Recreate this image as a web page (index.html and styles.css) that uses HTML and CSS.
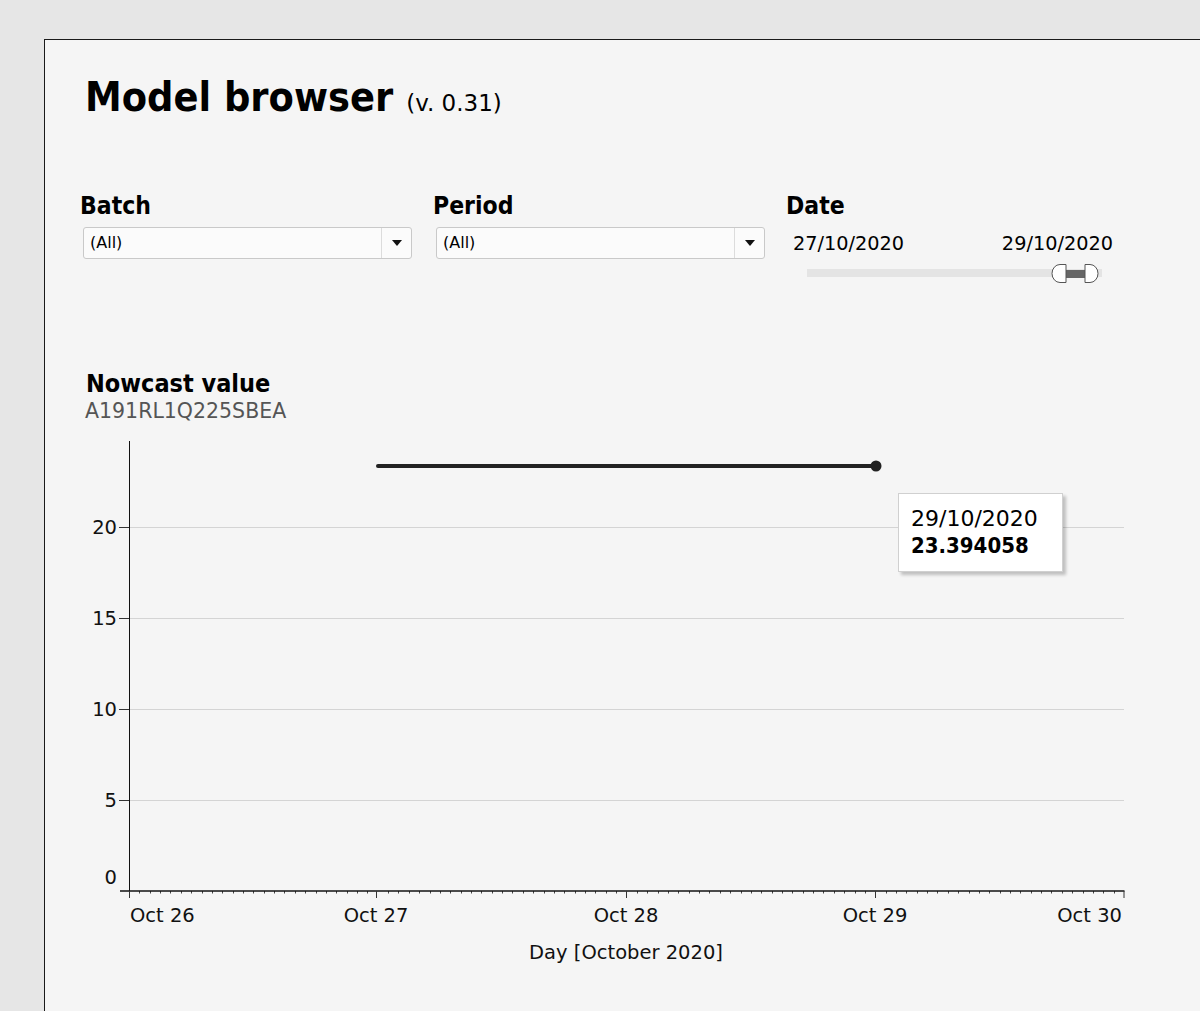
FILE: index.html
```html
<!DOCTYPE html>
<html>
<head>
<meta charset="utf-8">
<link rel="stylesheet" href="styles.css">
</head>
<body>
<div class="panel">
  <header class="title-row">
    <h1 class="title">Model browser</h1>
    <span class="version">(v. 0.31)</span>
  </header>

  <section class="filters">
    <div class="filter">
      <div class="filter-label">Batch</div>
      <div class="select">
        <span class="select-text">(All)</span>
        <span class="select-btn"><span class="arrow"></span></span>
      </div>
    </div>
    <div class="filter">
      <div class="filter-label">Period</div>
      <div class="select">
        <span class="select-text">(All)</span>
        <span class="select-btn"><span class="arrow"></span></span>
      </div>
    </div>
    <div class="filter filter-date">
      <div class="filter-label">Date</div>
      <div class="date-values">
        <span>27/10/2020</span>
        <span>29/10/2020</span>
      </div>
      <svg class="slider" width="330" height="22" viewBox="0 0 330 22">
        <rect x="22" y="6" width="295" height="8" fill="#e4e4e4"/>
        <rect x="280" y="7" width="21" height="8" fill="#666"/>
        <path d="M281,1.5 H275 A8,9 0 0 0 275,19.5 H281 Z" fill="#fff" stroke="#555" stroke-width="1"/>
        <path d="M300,1.5 H305 A8,9 0 0 1 305,19.5 H300 Z" fill="#fff" stroke="#555" stroke-width="1"/>
      </svg>
    </div>
  </section>

  <section class="chart-section">
    <div class="chart-title">Nowcast value</div>
    <div class="chart-sub">A191RL1Q225SBEA</div>
    <div class="chart">
      <svg class="chart-svg" width="1060" height="545" viewBox="0 0 1060 545">
        <g stroke="#d4d4d4" stroke-width="1">
          <line x1="49" y1="97.5" x2="1044" y2="97.5"/>
          <line x1="49" y1="188.5" x2="1044" y2="188.5"/>
          <line x1="49" y1="279.5" x2="1044" y2="279.5"/>
          <line x1="49" y1="370.5" x2="1044" y2="370.5"/>
        </g>
        <g stroke="#333" stroke-width="1">
          <line x1="39" y1="97.5" x2="49" y2="97.5"/>
          <line x1="39" y1="188.5" x2="49" y2="188.5"/>
          <line x1="39" y1="279.5" x2="49" y2="279.5"/>
          <line x1="39" y1="370.5" x2="49" y2="370.5"/>
        </g>
        <line x1="49.5" y1="11" x2="49.5" y2="461" stroke="#111" stroke-width="1"/>
        <g class="ylab" text-anchor="end">
          <text x="37" y="104">20</text>
          <text x="37" y="195">15</text>
          <text x="37" y="286">10</text>
          <text x="37" y="377">5</text>
          <text x="37" y="454">0</text>
        </g>
        <g id="minor" stroke="#444" stroke-width="1"></g>
        <line x1="40" y1="461" x2="1044.5" y2="461" stroke="#111" stroke-width="1.6"/>
        <g stroke="#333" stroke-width="1">
          <line x1="49.5" y1="461" x2="49.5" y2="468"/>
          <line x1="296.5" y1="461" x2="296.5" y2="468"/>
          <line x1="546.5" y1="461" x2="546.5" y2="468"/>
          <line x1="795.5" y1="461" x2="795.5" y2="468"/>
          <line x1="1044" y1="461" x2="1044" y2="468"/>
        </g>
        <g class="xlab">
          <text x="50" y="492">Oct 26</text>
          <text x="296" y="492" text-anchor="middle">Oct 27</text>
          <text x="546" y="492" text-anchor="middle">Oct 28</text>
          <text x="795" y="492" text-anchor="middle">Oct 29</text>
          <text x="1042" y="492" text-anchor="end">Oct 30</text>
        </g>
        <text class="xtitle" x="546" y="529" text-anchor="middle">Day [October 2020]</text>
        <line x1="298" y1="36" x2="796" y2="36" stroke="#222" stroke-width="4" stroke-linecap="round"/>
        <circle cx="796" cy="36" r="5.5" fill="#222"/>
      </svg>
      <div class="tooltip">
        <div class="tt-date">29/10/2020</div>
        <div class="tt-value">23.394058</div>
      </div>
    </div>
  </section>
</div>
<script>
  var g = document.getElementById('minor');
  var ns = 'http://www.w3.org/2000/svg';
  for (var i = 1; i < 96; i++) {
    if (i % 24 === 0) continue;
    var x = Math.round(49 + i * (995 / 96)) + 0.5;
    var l = document.createElementNS(ns, 'line');
    l.setAttribute('x1', x); l.setAttribute('x2', x);
    l.setAttribute('y1', 461); l.setAttribute('y2', 463.5);
    g.appendChild(l);
  }
</script>
</body>
</html>
```

FILE: styles.css
```css
html, body {
  margin: 0;
  padding: 0;
}
body {
  background: #e6e6e6;
  overflow: hidden;
  width: 1200px;
  height: 1011px;
  font-family: "DejaVu Sans", "Liberation Sans", sans-serif;
  color: #000;
}
.panel {
  margin: 39px 0 0 44px;
  width: 1200px;
  height: 1000px;
  border: 1px solid #1a1a1a;
  background: #f5f5f5;
}
.title-row {
  display: flex;
  align-items: baseline;
  padding: 32px 0 0 40px;
}
.title {
  margin: 0;
  font-family: "DejaVu Sans Condensed", "DejaVu Sans", sans-serif;
  font-weight: bold;
  font-size: 41px;
  line-height: 50px;
}
.version {
  margin-left: 13px;
  font-size: 23px;
  line-height: 50px;
}
.filters {
  display: flex;
  margin-top: 64px;
  padding-left: 34px;
}
.filter {
  width: 353px;
  flex: none;
}
.filter-label {
  font-family: "DejaVu Sans Condensed", "DejaVu Sans", sans-serif;
  font-weight: bold;
  font-size: 24.5px;
  line-height: 28px;
  padding-left: 1px;
}
.select {
  display: flex;
  margin: 7px 0 0 4px;
  width: 329px;
  height: 32px;
  box-sizing: border-box;
  border: 1px solid #c9c9c9;
  border-radius: 3px;
  background: #fbfbfb;
}
.select-text {
  flex: 1;
  padding-left: 6px;
  font-size: 16px;
  line-height: 30px;
}
.select-btn {
  width: 29px;
  border-left: 1px solid #dcdcdc;
  display: flex;
  align-items: center;
  justify-content: center;
}
.arrow {
  width: 0;
  height: 0;
  border-left: 5px solid transparent;
  border-right: 5px solid transparent;
  border-top: 6px solid #111;
}
.date-values {
  display: flex;
  justify-content: space-between;
  width: 320px;
  margin: 13px 0 0 8px;
  font-size: 19.3px;
  line-height: 22px;
}
.slider {
  display: block;
  margin-top: 8px;
}
.chart-section {
  margin-top: 84px;
  padding-left: 40px;
}
.chart-title {
  font-family: "DejaVu Sans Condensed", "DejaVu Sans", sans-serif;
  font-weight: bold;
  font-size: 25px;
  line-height: 30px;
  padding-left: 1px;
}
.chart-sub {
  font-size: 20.5px;
  line-height: 24px;
  color: #555;
}
.chart {
  position: relative;
  margin: 7px 0 0 -5px;
  width: 1060px;
  height: 545px;
}
.chart-svg {
  display: block;
}
.ylab text, .xlab text, .xtitle {
  font-family: "DejaVu Sans", sans-serif;
  font-size: 19.5px;
  fill: #111;
}
.tooltip {
  position: absolute;
  left: 818px;
  top: 63px;
  width: 165px;
  height: 79px;
  box-sizing: border-box;
  padding: 11px 0 0 12px;
  background: #fff;
  border: 1px solid #d0d0d0;
  box-shadow: 3px 3px 3px rgba(0, 0, 0, 0.22);
  font-size: 22px;
  line-height: 27px;
}
.tt-value {
  font-family: "DejaVu Sans Condensed", "DejaVu Sans", sans-serif;
  font-weight: bold;
}
```
